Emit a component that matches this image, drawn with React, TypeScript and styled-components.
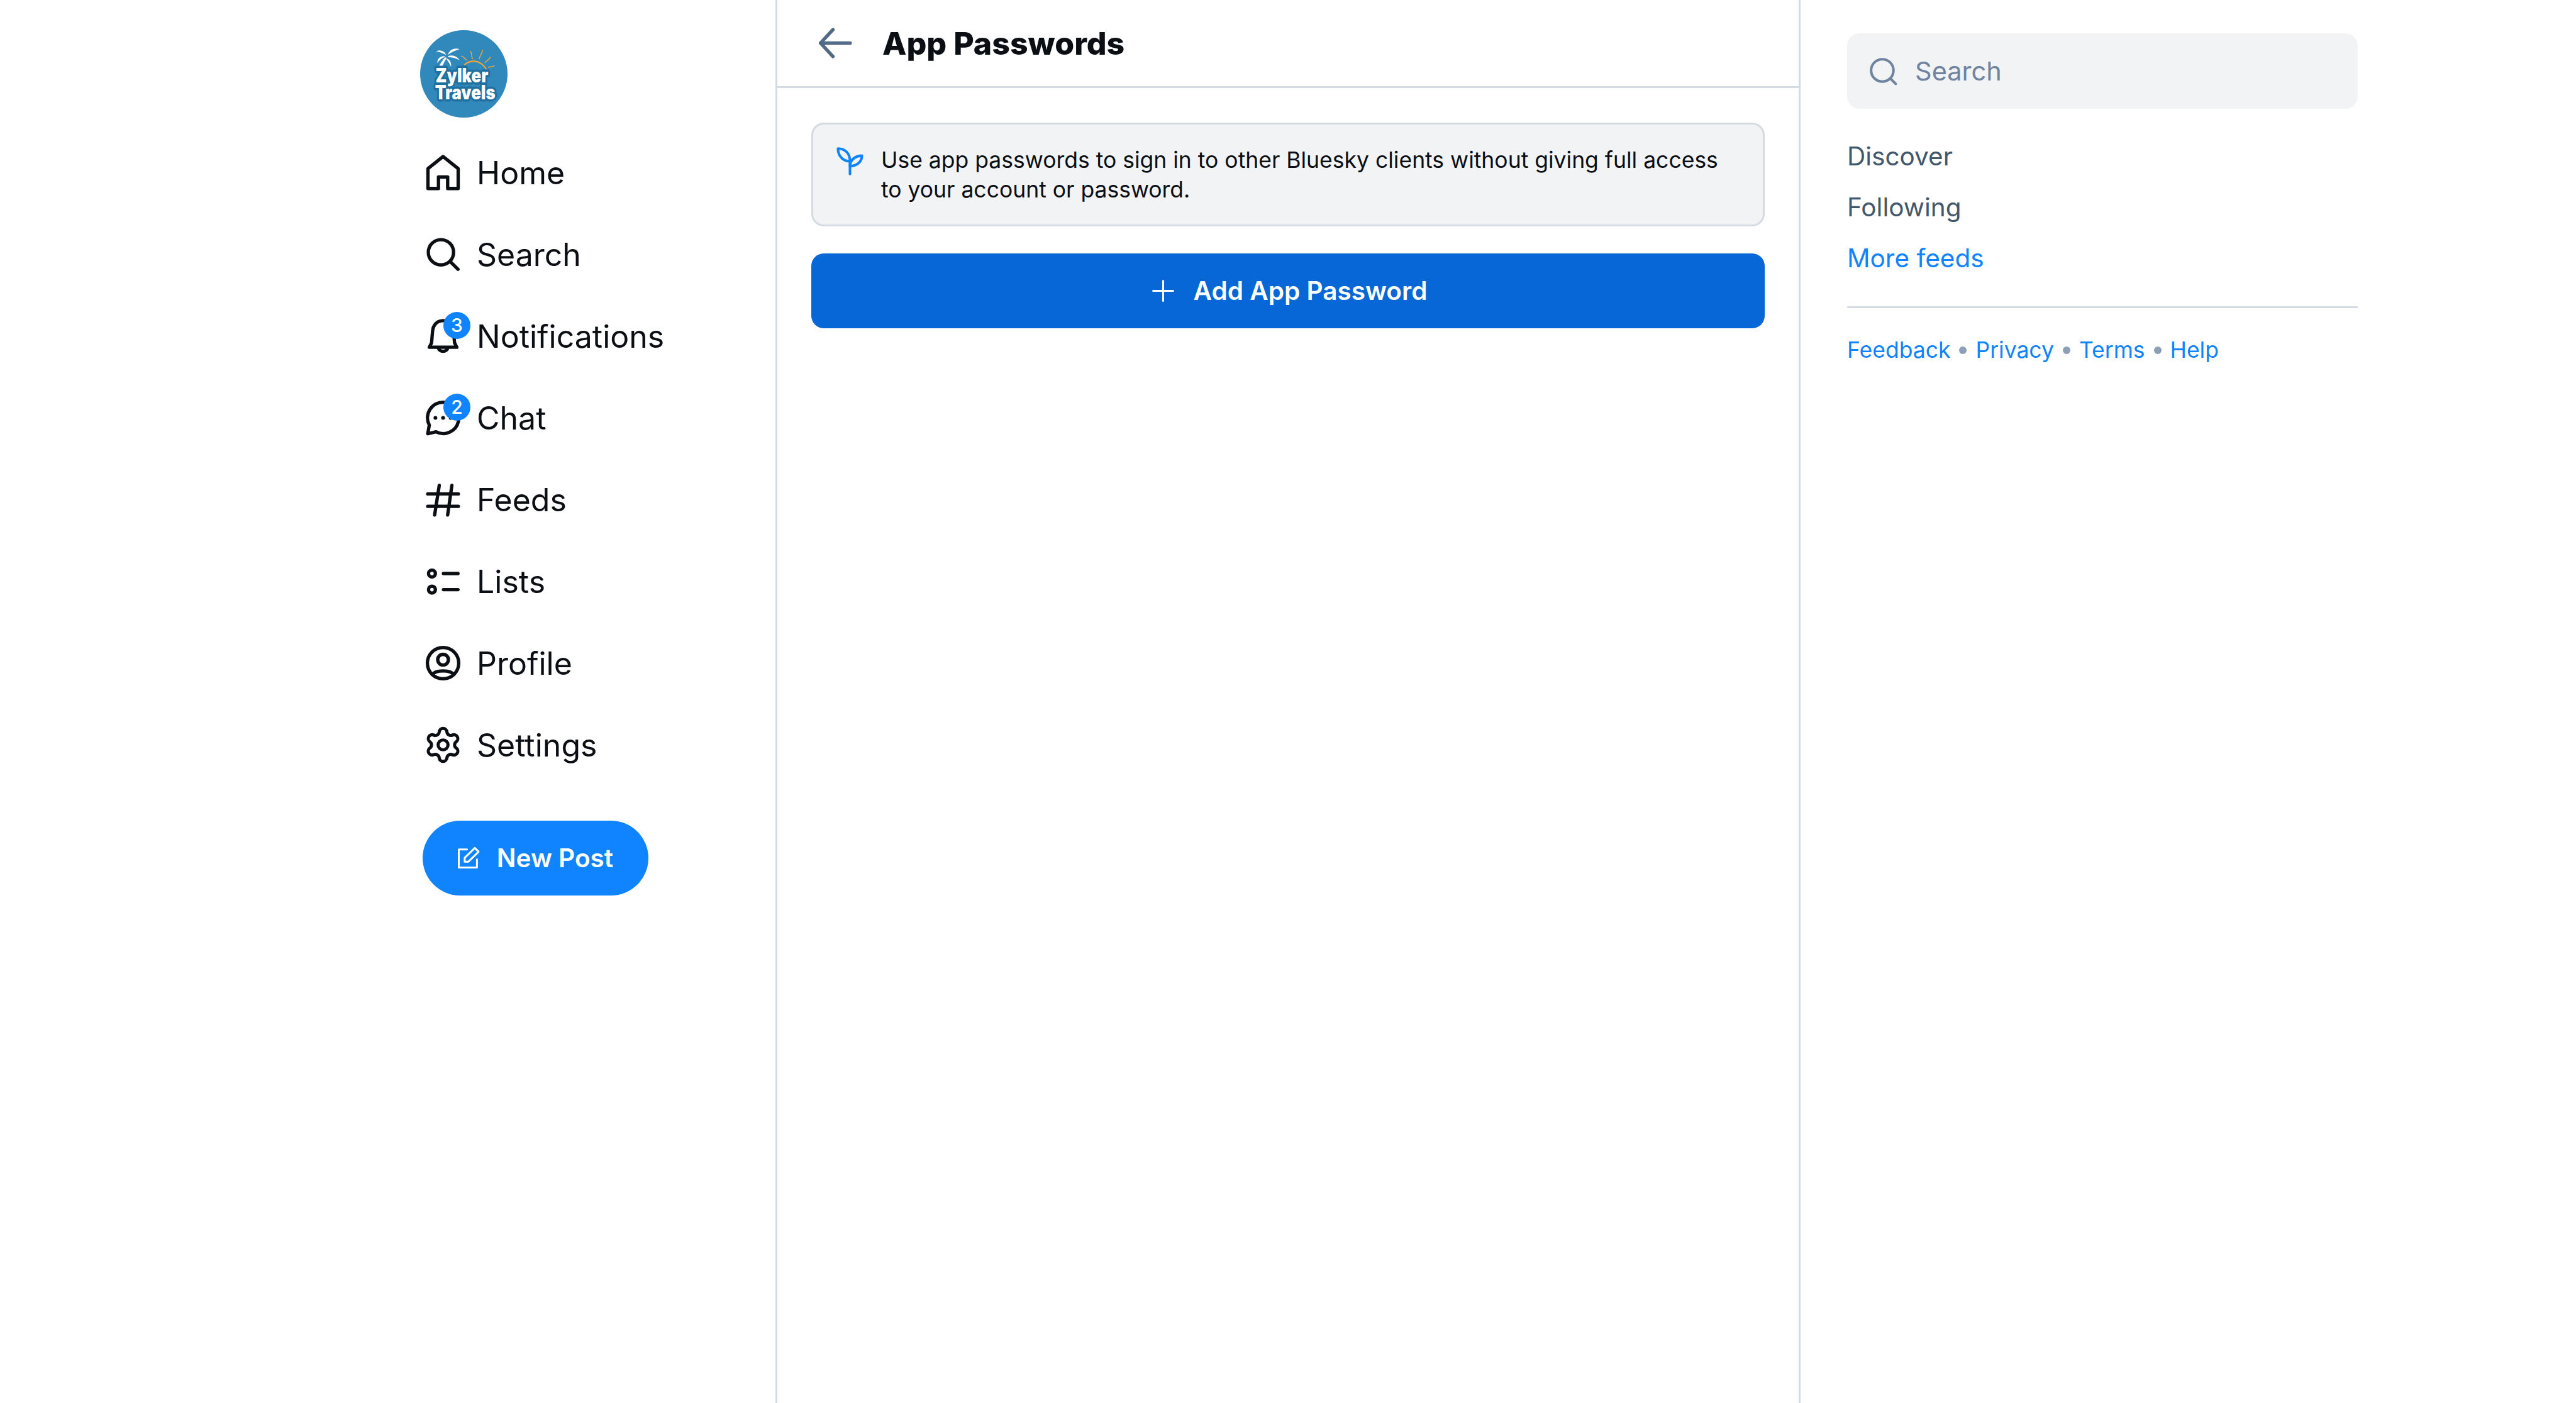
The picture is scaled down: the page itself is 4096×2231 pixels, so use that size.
import React from 'react';
import styled, { createGlobalStyle } from 'styled-components';
import { Settings } from 'lucide-react';

const GlobalStyle = createGlobalStyle`
  html, body {
    margin: 0;
    padding: 0;
    background: #fff;
    font-family: Inter, "Noto Sans", sans-serif;
    color: #0b0f14;
  }
  * {
    box-sizing: border-box;
  }
`;

const Page = styled.div`
  display: grid;
  grid-template-columns: 1233px 1630px 1fr;
  width: 4096px;
  height: 2231px;
  overflow: hidden;
`;

const Sidebar = styled.nav`
  display: flex;
  flex-direction: column;
  align-items: flex-start;
  padding: 48px 0 0 668px;
`;

const LogoBadge = styled.svg`
  display: block;
  width: 139px;
  height: 139px;
  margin-bottom: 22px;
`;

const NavRow = styled.a`
  display: flex;
  align-items: center;
  gap: 17px;
  height: 130px;
  font-size: 50px;
  line-height: 1;
  color: #0b0f14;
`;

const NavLabel = styled.span`
  position: relative;
  top: 1px;
`;

const IconWrap = styled.span`
  position: relative;
  display: flex;
  align-items: center;
  justify-content: center;
  width: 73px;
  height: 73px;
  flex: none;
`;

const Glyph = styled.svg`
  display: block;
  width: 73px;
  height: 73px;
  fill: none;
  stroke: currentColor;
  stroke-width: 1.75;
  stroke-linecap: round;
  stroke-linejoin: round;
`;

const CountBadge = styled.span`
  position: absolute;
  top: -2px;
  left: 37px;
  display: flex;
  align-items: center;
  justify-content: center;
  width: 43px;
  height: 43px;
  border-radius: 50%;
  background: #1083fe;
  color: #fff;
  font-size: 30px;
  font-weight: 500;
`;

const NewPost = styled.button`
  display: flex;
  align-items: center;
  justify-content: center;
  gap: 23px;
  width: 359px;
  height: 119px;
  margin: 56px 0 0 4px;
  padding: 0 6px 0 0;
  border: 0;
  border-radius: 60px;
  background: #1083fe;
  color: #fff;
  font-family: inherit;
  font-size: 40.5px;
  font-weight: 600;
`;

const SmallGlyph = styled.svg<{ $size: number }>`
  display: block;
  flex: none;
  width: ${(p) => p.$size}px;
  height: ${(p) => p.$size}px;
  fill: none;
  stroke: currentColor;
  stroke-width: 1.6;
  stroke-linecap: round;
  stroke-linejoin: round;
`;

const Main = styled.main`
  display: flex;
  flex-direction: column;
  border-left: 3px solid #d4dbe2;
  border-right: 3px solid #d4dbe2;
`;

const Header = styled.header`
  display: flex;
  align-items: center;
  height: 140px;
  padding-left: 55px;
  border-bottom: 3px solid #d4dbe2;
`;

const BackArrow = styled.svg`
  display: block;
  width: 73px;
  height: 73px;
  margin-right: 39px;
  fill: none;
  stroke: #526a85;
  stroke-width: 1.8;
  stroke-linecap: round;
  stroke-linejoin: round;
`;

const Title = styled.h1`
  margin: 0;
  font-size: 50px;
  font-weight: 800;
  line-height: 1;
`;

const Content = styled.section`
  display: flex;
  flex-direction: column;
  gap: 43px;
  padding: 55px 54px 0;
`;

const InfoBox = styled.div`
  display: flex;
  align-items: flex-start;
  gap: 19px;
  height: 165px;
  padding: 34px 50px 0 28px;
  border: 3px solid #d4dbe2;
  border-radius: 20px;
  background: #f1f3f5;
  font-size: 35.5px;
  line-height: 46.5px;
`;

const PlantIcon = styled(SmallGlyph)`
  color: #1083fe;
  margin-top: -6px;
`;

const AddButton = styled.button`
  display: flex;
  align-items: center;
  justify-content: center;
  gap: 26px;
  height: 119px;
  border: 0;
  border-radius: 20px;
  background: #0767d6;
  color: #fff;
  font-family: inherit;
  font-size: 40.5px;
  font-weight: 600;
`;

const Aside = styled.aside`
  display: flex;
  flex-direction: column;
  align-items: flex-start;
  padding: 53px 0 0 74px;
`;

const SearchBox = styled.div`
  display: flex;
  align-items: center;
  gap: 20px;
  width: 812px;
  height: 120px;
  padding-left: 27px;
  border-radius: 20px;
  background: #f1f3f5;
  color: #6f839f;
  font-size: 41.5px;
`;

const FeedList = styled.div`
  display: flex;
  flex-direction: column;
  margin-top: 35px;
`;

const FeedLink = styled.a<{ $accent?: boolean }>`
  display: block;
  height: 81px;
  font-size: 40.5px;
  line-height: 81px;
  color: ${(p) => (p.$accent ? '#1083fe' : '#42576c')};
`;

const Divider = styled.hr`
  width: 812px;
  height: 3px;
  margin: 36px 0 0;
  border: 0;
  background: #d4dbe2;
`;

const FooterLinks = styled.div`
  display: flex;
  align-items: center;
  gap: 14px;
  margin-top: 45px;
  font-size: 35.5px;
  line-height: 44px;
  color: #1083fe;
`;

const Dot = styled.span`
  width: 12px;
  height: 12px;
  border-radius: 50%;
  background: #8d9fb5;
`;

const Logo = () => (
  <LogoBadge viewBox="120 84 588 588">
    <circle cx="414" cy="378" r="294" fill="#3088bb" />
    <g fill="#fff">
      <path d="M228 226 C255 212 285 225 296 252 C275 238 250 232 228 226Z" />
      <path d="M385 212 C350 200 318 215 306 250 C330 232 358 218 385 212Z" />
      <path d="M283 258 C250 258 235 280 236 306 C250 285 265 270 288 264Z" />
      <path d="M308 258 C340 248 372 262 384 286 C360 272 335 266 308 266Z" />
      <path d="M303 275 C322 285 332 305 328 330 C318 310 310 295 298 280Z" />
      <path d="M288 266 L300 270 C286 290 276 310 270 328 L248 326 C258 305 272 285 288 266Z" />
    </g>
    <g fill="none" stroke="#f5a733" strokeLinecap="round">
      <path d="M420 315 C465 280 525 285 563 343" strokeWidth="9" />
      <path d="M398 258 C415 262 420 278 434 286" strokeWidth="6" />
      <path d="M458 226 C472 240 462 260 473 276" strokeWidth="6" />
      <path d="M541 220 C538 240 520 255 519 276" strokeWidth="6" />
      <path d="M592 266 C585 285 565 288 557 303" strokeWidth="6" />
      <path d="M618 324 C605 334 592 328 579 334" strokeWidth="6" />
    </g>
    <g
      fill="#fff"
      stroke="#1f6f9f"
      strokeWidth="30"
      strokeLinejoin="round"
      fontFamily="Inter, sans-serif"
      fontWeight="900"
      fontSize="130"
      style={{ paintOrder: 'stroke' }}
    >
      <text transform="translate(224 434) scale(0.84 1)">Zylker</text>
      <text transform="translate(220 551) scale(0.84 1)">Travels</text>
    </g>
  </LogoBadge>
);

const HomeIcon = () => (
  <Glyph viewBox="0 0 24 24">
    <path d="M12 3.6 L19.9 9.9 V20.3 H14.4 V14.3 H9.6 V20.3 H4.1 V9.9 Z" />
  </Glyph>
);

const SearchIcon = () => (
  <Glyph viewBox="0 0 24 24">
    <circle cx="10.9" cy="10.9" r="6.6" />
    <path d="M15.8 15.8 L19.8 19.8" />
  </Glyph>
);

const BellIcon = () => (
  <Glyph viewBox="0 0 24 24">
    <path d="M4.8 17.8 H19.2 L18 15.5 L17.5 9.5 C17.2 6 15 3.9 12 3.9 C9 3.9 6.8 6 6.5 9.5 L6 15.5 Z" />
    <path d="M9.5 18 C10 20.6 14 20.6 14.5 18" />
  </Glyph>
);

const ChatIcon = () => (
  <Glyph viewBox="0 0 24 24">
    <path d="M12 3.8 A8.2 8.2 0 1 1 8.3 19.3 L4 20.3 L4.8 15.8 A8.2 8.2 0 0 1 12 3.8 Z" />
    <path d="M8 12 h.01 M12 12 h.01 M16 12 h.01" strokeWidth="2" />
  </Glyph>
);

const HashIcon = () => (
  <Glyph viewBox="0 0 24 24">
    <path d="M4 9 H20 M4 15.5 H20 M10 4.6 L7.6 20 M16.6 4.6 L14.4 20" />
  </Glyph>
);

const ListIcon = () => (
  <Glyph viewBox="0 0 24 24">
    <circle cx="6.2" cy="7.9" r="1.8" />
    <circle cx="6.2" cy="16.3" r="1.8" />
    <path d="M12.2 7.9 H19.8 M12.2 16.3 H19.8" />
  </Glyph>
);

const ProfileIcon = () => (
  <Glyph viewBox="0 0 24 24">
    <circle cx="12" cy="12" r="8.2" />
    <circle cx="12" cy="10.2" r="2.8" />
    <path d="M6.4 18 C8 15.4 16 15.4 17.6 18" />
  </Glyph>
);

const navItems = [
  { label: 'Home', icon: <HomeIcon /> },
  { label: 'Search', icon: <SearchIcon /> },
  { label: 'Notifications', icon: <BellIcon />, count: 3 },
  { label: 'Chat', icon: <ChatIcon />, count: 2 },
  { label: 'Feeds', icon: <HashIcon /> },
  { label: 'Lists', icon: <ListIcon /> },
  { label: 'Profile', icon: <ProfileIcon /> },
  { label: 'Settings', icon: <Settings size={63} strokeWidth={1.9} /> },
];

const App = () => {
  return (
    <Page>
      <GlobalStyle />
      <Sidebar>
        <Logo />
        {navItems.map((item) => (
          <NavRow key={item.label}>
            <IconWrap>
              {item.icon}
              {item.count ? <CountBadge>{item.count}</CountBadge> : null}
            </IconWrap>
            <NavLabel>{item.label}</NavLabel>
          </NavRow>
        ))}
        <NewPost>
          <SmallGlyph $size={45} viewBox="0 0 24 24">
            <path d="M11 4.6 H4 V20 H19.4 V13" />
            <path d="M9 15 V11.8 L17.6 3.4 L20.8 6.6 L12.2 15 Z" />
          </SmallGlyph>
          New Post
        </NewPost>
      </Sidebar>
      <Main>
        <Header>
          <BackArrow viewBox="0 0 24 24">
            <path d="M4.5 12 H20 M11 5 L4.5 12 L11 19" />
          </BackArrow>
          <Title>App Passwords</Title>
        </Header>
        <Content>
          <InfoBox>
            <PlantIcon $size={61} viewBox="0 0 24 24">
              <path d="M12 20 V11.5" />
              <path d="M12 12 C8 12 4.5 9 4.5 4 C9 4 12 7 12 12 Z" />
              <path d="M12 15 C16 15 19.5 12.5 19.5 8.5 C15.5 8.5 12 11 12 15 Z" />
            </PlantIcon>
            <span>
              Use app passwords to sign in to other Bluesky clients without giving full access to
              your account or password.
            </span>
          </InfoBox>
          <AddButton>
            <SmallGlyph $size={45} viewBox="0 0 24 24">
              <path d="M12 3.5 V20.5 M3.5 12 H20.5" />
            </SmallGlyph>
            Add App Password
          </AddButton>
        </Content>
      </Main>
      <Aside>
        <SearchBox>
          <SmallGlyph $size={61} viewBox="0 0 24 24">
            <circle cx="11.4" cy="11.4" r="7" />
            <path d="M16.6 16.6 L19.8 19.8" />
          </SmallGlyph>
          Search
        </SearchBox>
        <FeedList>
          <FeedLink>Discover</FeedLink>
          <FeedLink>Following</FeedLink>
          <FeedLink $accent>More feeds</FeedLink>
        </FeedList>
        <Divider />
        <FooterLinks>
          <span>Feedback</span>
          <Dot />
          <span>Privacy</span>
          <Dot />
          <span>Terms</span>
          <Dot />
          <span>Help</span>
        </FooterLinks>
      </Aside>
    </Page>
  );
};

export default App;
